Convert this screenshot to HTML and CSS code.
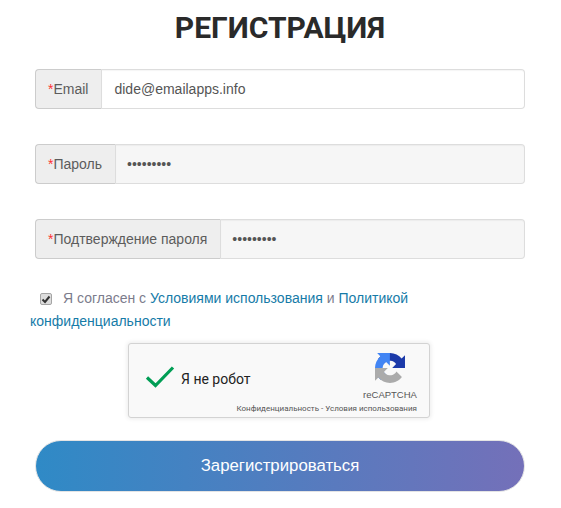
FILE: index.html
```html
<!DOCTYPE html>
<html lang="ru">
<head>
<meta charset="utf-8">
<title>Регистрация</title>
<link rel="stylesheet" href="styles.css">
</head>
<body>
<main class="page">
  <h1 class="title">РЕГИСТРАЦИЯ</h1>
  <form class="form">
    <div class="group">
      <label class="addon"><span class="req">*</span>Email</label>
      <input class="field" type="text" value="dide@emailapps.info">
    </div>
    <div class="group">
      <label class="addon"><span class="req">*</span>Пароль</label>
      <input class="field filled" type="password" value="123456789">
    </div>
    <div class="group">
      <label class="addon"><span class="req">*</span>Подтверждение пароля</label>
      <input class="field filled" type="password" value="123456789">
    </div>
    <p class="agree"><span class="check"><svg viewBox="0 0 10 10" width="10" height="10"><path d="M1.500 5.500 L4 8 L8.500 2.500" fill="none" stroke="#333" stroke-width="2"/></svg></span>Я согласен с <a href="#">Условиями использования</a> и <a href="#">Политикой конфиденциальности</a></p>
    <div class="captcha">
      <svg class="tick" viewBox="0 0 30 24" width="30" height="24"><path d="M2 12.500 L10.500 20.500 L28 2.500" fill="none" stroke="#009e55" stroke-width="3.200"/></svg>
      <span class="robot">Я не робот</span>
      <div class="brand">
        <svg class="logo" viewBox="0 0 64 64" width="30" height="30">
          <path d="M64 31.955l-.033-1.37V4.687l-7.16 7.16C50.948 4.674 42.033.093 32.05.093c-10.4 0-19.622 4.96-25.458 12.64l11.736 11.86a15.55 15.55 0 0 1 4.754-5.334c2.05-1.6 4.952-2.906 8.968-2.906.485 0 .86.057 1.135.163 4.976.393 9.288 3.14 11.828 7.124l-8.307 8.307c10.522-.04 22.4-.066 27.295.006" fill="#1c3aa9"/>
          <path d="M31.862.094l-1.37.033H4.594l7.16 7.16C4.58 13.147 0 22.06 0 32.046c0 10.4 4.96 19.622 12.64 25.458l11.86-11.736a15.55 15.55 0 0 1-5.334-4.754c-1.6-2.05-2.906-4.952-2.906-8.968 0-.485.057-.86.163-1.135.393-4.976 3.14-9.288 7.124-11.828l8.307 8.307c-.04-10.522-.066-22.4.006-27.295" fill="#4285f4"/>
          <path d="M.001 32.045l.033 1.37v25.898l7.16-7.16c5.86 7.173 14.774 11.754 24.76 11.754 10.4 0 19.622-4.96 25.458-12.64l-11.736-11.86a15.55 15.55 0 0 1-4.754 5.334c-2.05 1.6-4.952 2.906-8.968 2.906-.485 0-.86-.057-1.135-.163-4.976-.393-9.288-3.14-11.828-7.124l8.307-8.307c-10.522.04-22.4.066-27.295-.006" fill="#ababab"/>
        </svg>
        <span class="brand-name">reCAPTCHA</span>
      </div>
      <span class="terms">Конфиденциальность - Условия использования</span>
    </div>
    <button class="submit" type="button">Зарегистрироваться</button>
  </form>
</main>
</body>
</html>
```
FILE: styles.css
```css
* { box-sizing: border-box; }
body { margin: 0; background: #fff; font-family: "Liberation Sans", Arial, sans-serif; color: #555; }
.page { width: 561px; height: 508px; padding: 0 36px 0 35px; overflow: hidden; }
.title { margin: 0; padding-top: 10px; height: 69px; text-align: center; font: 700 30px/35px Roboto, sans-serif; color: #2a2a2a; }
.form { display: flex; flex-direction: column; }
.group { display: flex; height: 40px; margin-bottom: 35px; font-size: 14px; }
.addon { display: flex; align-items: center; padding: 0 13px 0 12px; background: #eee; border: 1px solid #ccc; border-right-color: #ddd; border-radius: 4px 0 0 4px; white-space: nowrap; color: #5c5c5c; }
.req { color: #f33; }
.field { flex: 1; min-width: 0; height: 40px; padding: 0 12px; border: 1px solid #ddd; border-left: 0; border-radius: 0 4px 4px 0; background: #fff; color: #555; font: 14px "Liberation Sans", Arial, sans-serif; box-shadow: inset 0 1px 1px rgba(0,0,0,.04); }
.filled { padding-left: 11px; background: #f6f6f6; }
.agree { margin: -7px 0 0 -5px; font-size: 14px; line-height: 23px; color: #7c7c8c; width: 420px; text-indent: 10px; }
.agree a { color: #167ba8; text-decoration: none; }
.check { display: inline-flex; align-items: center; justify-content: center; width: 12px; height: 12px; margin-right: 11px; background: #ddd; border: 1px solid #a5a5a5; border-radius: 2px; text-indent: 0; vertical-align: -1px; }
.captcha { position: relative; display: flex; align-items: center; align-self: flex-start; width: 302px; height: 75px; margin: 10px 0 0 93px; background: #f9f9f9; border: 1px solid #d3d3d3; border-radius: 3px; box-shadow: 0 0 4px 1px rgba(0,0,0,.08); }
.tick { margin: 0 0 8px 16px; }
.robot { margin: 0 0 3px 6px; font: 14px Roboto, sans-serif; color: #222; }
.brand { position: absolute; top: 9px; right: 12px; width: 54px; display: flex; flex-direction: column; align-items: center; }
.brand-name { margin-top: 6px; font: 9.5px "Liberation Sans", Arial, sans-serif; color: #555; white-space: nowrap; }
.terms { position: absolute; right: 12px; bottom: 4px; font: 8px Roboto, sans-serif; color: #555; white-space: nowrap; }
.submit { width: 490px; height: 52px; margin-top: 22px; border: 1px solid #e4e4e4; border-radius: 26px; background: linear-gradient(90deg, #2f8ac6, #7470b9); color: #fff; font: 16.8px "Liberation Sans", Arial, sans-serif; }
```
